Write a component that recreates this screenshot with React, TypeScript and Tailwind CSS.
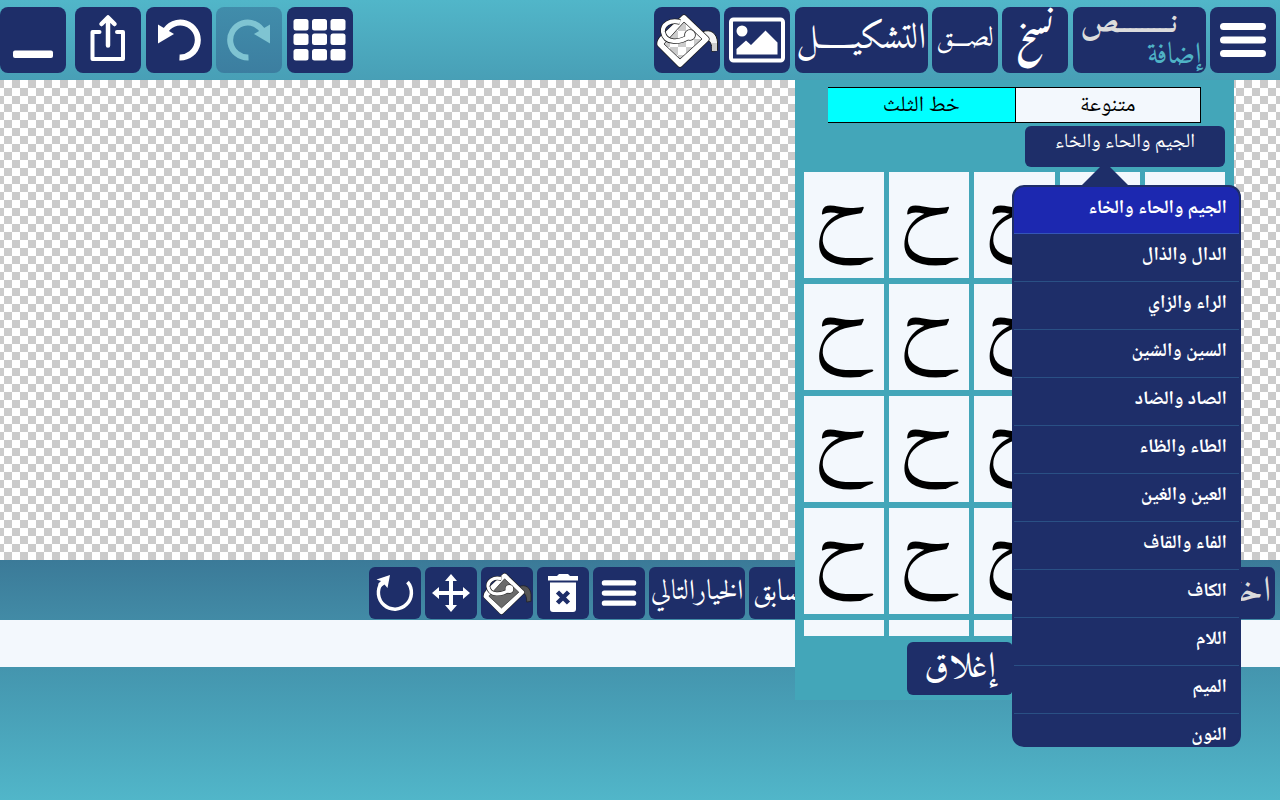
import type { ReactNode } from "react";

const letterGroups = [
  "الجيم والحاء والخاء",
  "الدال والذال",
  "الراء والزاي",
  "السين والشين",
  "الصاد والضاد",
  "الطاء والظاء",
  "العين والغين",
  "الفاء والقاف",
  "الكاف",
  "اللام",
  "الميم",
  "النون",
];

const glyphCells = Array.from({ length: 25 }, (_, i) => i);

function TopButton({ label, className = "w-[66px]", children }: { label?: string; className?: string; children: ReactNode }) {
  return (
    <button
      type="button"
      aria-label={label}
      className={`flex h-[66px] shrink-0 items-center justify-center overflow-hidden rounded-lg bg-[#1e2e69] text-white ${className}`}
    >
      {children}
    </button>
  );
}

function ToolButton({ label, className = "w-[52px] justify-center", children }: { label?: string; className?: string; children: ReactNode }) {
  return (
    <button
      type="button"
      aria-label={label}
      className={`flex h-[52px] shrink-0 items-center overflow-hidden rounded-md bg-[#1e2e69] text-white ${className}`}
    >
      {children}
    </button>
  );
}

function Bars({ className }: { className: string }) {
  return (
    <svg viewBox="0 0 48 36" className={className} fill="none" stroke="currentColor" strokeWidth="7" strokeLinecap="round">
      <path d="M4.500 4.500H43.500M4.500 18H43.500M4.500 31.500H43.500" />
    </svg>
  );
}

function Undo({ className = "" }: { className?: string }) {
  return (
    <svg viewBox="0 0 66 66" className={`h-[66px] w-[66px] ${className}`}>
      <path d="M18.500 25.500A17.500 17.500 0 1 1 33.500 50.500" fill="none" stroke="currentColor" strokeWidth="6" />
      <path d="M12 17.500L28 27L12 36.500Z" fill="currentColor" />
    </svg>
  );
}

function Bucket({ className, checkered = false }: { className: string; checkered?: boolean }) {
  const fill = checkered ? "url(#bucket-checks)" : "#6b6b6b";
  const body = "M30 11L52 32L26 57L6 37Q6 34 9 31Z";
  const handle = "M26 15C16 12 8 18 9 25C11 37 26 36 36 29";
  return (
    <svg viewBox="0 0 66 66" className={className} strokeLinejoin="round">
      <defs>
        <pattern id="bucket-checks" width="16" height="16" patternUnits="userSpaceOnUse">
          <rect width="16" height="16" fill="#fff" />
          <path d="M8 0h8v8H8zM0 8h8v8H0z" fill="#ccc" />
        </pattern>
      </defs>
      <path d="M48 25C57 21 63 27 63.500 35V43.500L58 44.500C58 37 56 32 52 34Z" fill={checkered ? "#f4f4f4" : "#555"} stroke="#222" strokeWidth="1" />
      {checkered && <path d="M58 36H63V44H58Z" fill="#ccc" />}
      <path d={body} fill="none" stroke="#222" strokeWidth="7" />
      <path d={body} fill="#fff" stroke="#fff" strokeWidth="5.500" />
      <path d="M30 15L48 32L26 52L10 37Z" fill={fill} stroke="#222" strokeWidth="0.800" />
      <path d={handle} fill="none" stroke="#222" strokeWidth="5.500" />
      <circle cx="36" cy="28" r="5.800" fill="#222" />
      <path d={handle} fill="none" stroke="#fff" strokeWidth="4" />
      <circle cx="36" cy="28" r="5" fill="#fff" />
    </svg>
  );
}

export default function App() {
  return (
    <div className="relative flex min-h-screen flex-col overflow-hidden bg-white font-['Noto_Naskh_Arabic',sans-serif]">
      <header className="flex h-20 items-start justify-between bg-linear-to-b from-[#51b6c9] to-[#489fb6] pt-[7px] pr-1">
        <div className="flex gap-[9px]">
          <TopButton label="تصغير">
            <svg viewBox="0 0 66 66" className="h-[66px] w-[66px]">
              <rect x="13" y="43.500" width="40" height="7.500" rx="2" fill="currentColor" />
            </svg>
          </TopButton>
          <div className="flex w-[278px] justify-between">
            <TopButton label="مشاركة">
              <svg viewBox="0 0 66 66" className="h-[66px] w-[66px]" fill="none" stroke="currentColor" strokeWidth="4.500" strokeLinecap="round" strokeLinejoin="round">
                <path d="M24.500 25H17.500V52H48V25H42" strokeWidth="4" />
                <path d="M33 38.500V11M26.500 17L33 10.500L39.500 17" />
              </svg>
            </TopButton>
            <TopButton label="تراجع">
              <Undo />
            </TopButton>
            <button type="button" disabled aria-label="إعادة" className="h-[66px] w-[66px] rounded-lg bg-linear-to-b from-[#418dab] to-[#3c7ea0] text-[#7fc4d2]">
              <Undo className="-scale-x-100" />
            </button>
            <TopButton label="شبكة">
              <svg viewBox="0 0 66 66" className="h-[66px] w-[66px]" fill="currentColor">
                {[12, 26.5, 42].map((y) =>
                  [6.5, 25, 43.5].map((x) => <rect key={`${x}-${y}`} x={x} y={y} width="15" height="11.500" rx="2.500" />),
                )}
              </svg>
            </TopButton>
          </div>
        </div>
        <div className="flex w-[622px] justify-between font-['Amiri',serif]">
          <TopButton label="لون الخلفية">
            <Bucket className="h-[66px] w-[66px]" checkered />
          </TopButton>
          <TopButton label="صورة">
            <svg viewBox="0 0 66 66" className="h-[66px] w-[66px]" fill="none">
              <rect x="7" y="12.500" width="52" height="41" rx="2.500" stroke="currentColor" strokeWidth="4" />
              <circle cx="18" cy="24" r="5.500" fill="currentColor" />
              <path d="M12.500 47.500V42L22 33.500L27 38L41.500 23.500L53.500 35.500V47.500Z" fill="currentColor" />
            </svg>
          </TopButton>
          <TopButton className="w-[133px]">
            <span dir="rtl" className="text-[36px] leading-[60px]">التشكيـــــل</span>
          </TopButton>
          <TopButton>
            <span dir="rtl" className="text-[28px] leading-[60px]">لصـــق</span>
          </TopButton>
          <TopButton>
            <span dir="rtl" className="font-['Noto_Nastaliq_Urdu'] text-[28px] font-bold leading-[60px]">نسخ</span>
          </TopButton>
          <TopButton className="w-[133px] flex-col px-1">
            <span dir="rtl" className="mr-6 self-end text-[32px] font-bold leading-[32px] text-[#dcdcdc]">نـــــــــص</span>
            <span dir="rtl" className="self-end text-[30px] leading-[32px] text-[#4fb3c6]">إضافة</span>
          </TopButton>
          <TopButton label="القائمة">
            <Bars className="h-9 w-12" />
          </TopButton>
        </div>
      </header>

      <main className="min-h-60 flex-1 bg-[repeating-conic-gradient(#cbcbcb_0_25%,#ffffff_0_50%)] bg-[length:16px_16px] bg-[position:4px_0px]" />

      <div className="flex h-[60px] items-center justify-end gap-1 bg-linear-to-b from-[#3b7a98] to-[#428ba6] pt-[7px] pr-[5px] pb-px font-['Amiri',serif]">
        <ToolButton label="تدوير">
          <svg viewBox="0 0 52 52" className="h-[52px] w-[52px]" fill="none" stroke="currentColor">
            <path d="M12.500 16A16.500 16.500 0 1 0 38.500 15" strokeWidth="3.500" />
            <path d="M7.500 12.500L21 8L18.500 21L15.500 17.500L12 20L9 17L12 14Z" fill="currentColor" stroke="none" />
          </svg>
        </ToolButton>
        <ToolButton label="تحريك">
          <svg viewBox="0 0 52 52" className="h-[52px] w-[52px]" fill="currentColor">
            <path d="M26 7L32 14H28V24H38V20L45 26L38 32V28H28V38H32L26 45L20 38H24V28H14V32L7 26L14 20V24H24V14H20Z" />
          </svg>
        </ToolButton>
        <ToolButton label="تعبئة">
          <Bucket className="h-[52px] w-[52px]" />
        </ToolButton>
        <ToolButton label="حذف">
          <svg viewBox="0 0 52 52" className="h-[52px] w-[52px]">
            <path d="M11 9H20L22 7H31L33 9H41V13.500H11Z" fill="currentColor" />
            <path d="M13 15.500H39V42Q39 45 36 45H16Q13 45 13 42Z" fill="currentColor" />
            <path d="M20.500 25L31.500 36M31.500 25L20.500 36" stroke="#1e2e69" strokeWidth="4.500" />
          </svg>
        </ToolButton>
        <ToolButton label="خيارات">
          <Bars className="h-7 w-9" />
        </ToolButton>
        <ToolButton className="w-24 justify-center">
          <span dir="rtl" className="whitespace-nowrap text-[28px] leading-[50px]">الخيارالتالي</span>
        </ToolButton>
        <div className="flex w-[526px] justify-between">
          <ToolButton className="w-24 justify-start pl-1">
            <span dir="rtl" className="whitespace-nowrap text-[30px] leading-[50px]">السابق</span>
          </ToolButton>
          <ToolButton className="w-24 justify-end pr-1">
            <span dir="rtl" className="text-[36px] leading-[50px] text-[#dcdcdc]">اختر</span>
          </ToolButton>
        </div>
      </div>

      <input aria-label="النص" dir="rtl" className="h-[47px] w-full border-0 bg-[#f3f8fd] px-4 text-lg outline-none" />
      <footer className="h-[133px] bg-linear-to-b from-[#4495ae] to-[#51b6c9]" />

      <section className="absolute top-20 right-[46px] flex w-[439px] flex-col bg-[#43a6b9] px-[9px] pt-[7px] pb-[5px]">
        <div className="mx-6 grid grid-cols-2 text-[22px] text-black">
          <button type="button" className="h-9 border-y border-black bg-[#00ffff] leading-[36px]">خط الثلث</button>
          <button type="button" className="h-9 border border-black bg-[#f3f8fd] leading-[36px]">متنوعة</button>
        </div>
        <div className="relative mt-[3px] w-[200px] self-end">
          <button type="button" aria-haspopup="listbox" aria-expanded="true" className="block h-[41px] w-full rounded-md bg-[#1e2e69] pb-2 text-xl text-white">
            الجيم والحاء والخاء
          </button>
          <div className="absolute -right-4 top-9 z-10 w-[229px]">
            <svg viewBox="0 0 48 24" className="mx-auto block h-6 w-12 translate-x-[-22px]" fill="#1e2e69">
              <path d="M0 24L24 0L48 24Z" />
            </svg>
            <ul role="listbox" dir="rtl" className="-mt-px h-[562px] overflow-hidden rounded-xl border-2 border-[#1e2e69] bg-[#1e2e69]">
              {letterGroups.map((name, i) => (
                <li key={name} role="option" aria-selected={i === 0}>
                  <button
                    type="button"
                    className={`block w-full border-b px-3 pb-0.5 text-right text-[19px] font-bold text-white ${i === 0 ? "h-[47px] border-[#3455b8] bg-[#1c28b0]" : "h-12 border-[#2a5085]"}`}
                  >
                    {name}
                  </button>
                </li>
              ))}
            </ul>
          </div>
        </div>
        <div className="mt-[5px] grid h-[464px] auto-rows-[106px] grid-cols-5 gap-x-[5px] gap-y-[6px] overflow-hidden font-['Amiri',serif]">
          {glyphCells.map((i) => (
            <button key={i} type="button" className="flex items-start justify-center bg-[#f3f8fd] pr-2 text-[78px] leading-[70px] text-black">
              ح
            </button>
          ))}
        </div>
        <div className="mt-[6px] flex justify-center pr-[109px] font-['Amiri',serif]">
          <button type="button" className="h-[53px] w-[106px] rounded-md bg-[#1e2e69] text-[36px] leading-[50px] text-white">إغلاق</button>
        </div>
      </section>
    </div>
  );
}
